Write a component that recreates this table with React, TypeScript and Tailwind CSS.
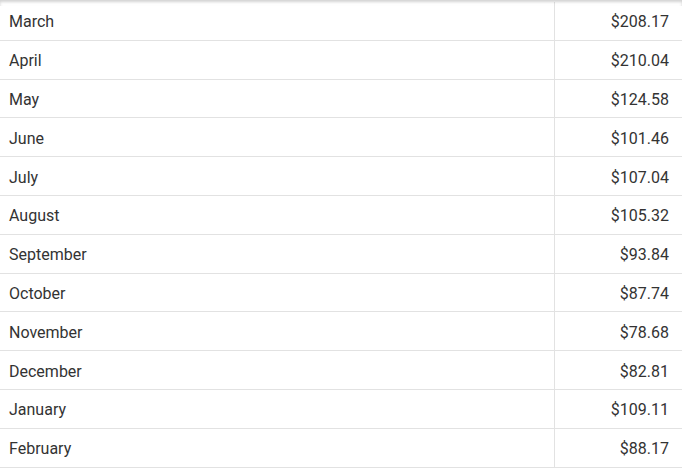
const ROWS: [string, string][] = [
  ['March', '$208.17'],
  ['April', '$210.04'],
  ['May', '$124.58'],
  ['June', '$101.46'],
  ['July', '$107.04'],
  ['August', '$105.32'],
  ['September', '$93.84'],
  ['October', '$87.74'],
  ['November', '$78.68'],
  ['December', '$82.81'],
  ['January', '$109.11'],
  ['February', '$88.17'],
];

export default function App() {
  return (
    <div className="relative h-[470px] w-[682px] overflow-hidden bg-white font-['Roboto',sans-serif] text-[16px] text-[#333]">
      <div className="pointer-events-none absolute inset-x-0 top-0 h-[6px] shadow-[inset_0_2px_3px_rgba(0,0,0,0.18)]" />
      <div className="pt-[2px]">
        {ROWS.map(([month, amount]) => (
          <div key={month} className="flex h-[38.8px] border-b border-[#e2e2e2]">
            <div className="flex flex-1 items-center border-r border-[#e2e2e2] pl-[9px] pt-[3px]">{month}</div>
            <div className="flex w-[127px] items-center justify-end pr-[13px] pt-[3px]">{amount}</div>
          </div>
        ))}
      </div>
    </div>
  );
}
